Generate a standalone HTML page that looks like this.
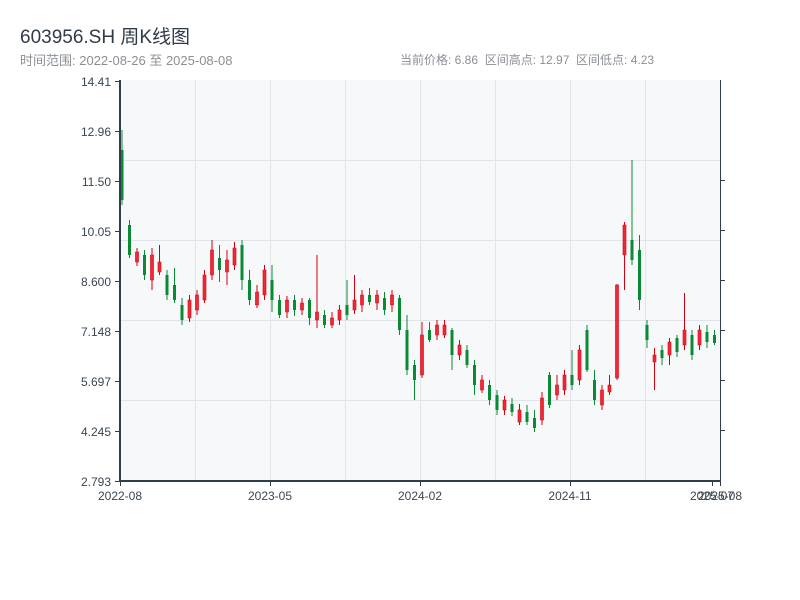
<!DOCTYPE html>
<html><head><meta charset="utf-8">
<style>
html,body{margin:0;padding:0;background:#fff;width:800px;height:600px;overflow:hidden}
body{font-family:"Liberation Sans","Noto Sans CJK SC",sans-serif;position:relative}
.t{position:absolute;left:20px;top:22px;font-size:19px;color:#2f3b4a}
.s{position:absolute;left:20px;top:50px;font-size:13px;color:#8a8f96}
.r{position:absolute;left:400px;top:51px;font-size:12px;color:#8a8f96;white-space:pre}
svg{position:absolute;left:0;top:0}
</style></head><body>
<div class="t">603956.SH 周K线图</div>
<div class="s">时间范围: 2022-08-26 至 2025-08-08</div>
<div class="r">当前价格: 6.86  区间高点: 12.97  区间低点: 4.23</div>
<svg width="800" height="600" xmlns="http://www.w3.org/2000/svg" font-family="Liberation Sans, sans-serif" font-size="12">
<rect x="120" y="80" width="600" height="401" fill="#f6f8fa"/>
<g stroke="#e1e4ea" stroke-width="1">
<line x1="195.5" y1="80" x2="195.5" y2="481"/><line x1="270.5" y1="80" x2="270.5" y2="481"/>
<line x1="345.5" y1="80" x2="345.5" y2="481"/><line x1="420.5" y1="80" x2="420.5" y2="481"/>
<line x1="495.5" y1="80" x2="495.5" y2="481"/><line x1="570.5" y1="80" x2="570.5" y2="481"/>
<line x1="645.5" y1="80" x2="645.5" y2="481"/>
<line x1="120" y1="160.5" x2="720" y2="160.5"/><line x1="120" y1="240.5" x2="720" y2="240.5"/>
<line x1="120" y1="320.5" x2="720" y2="320.5"/><line x1="120" y1="400.5" x2="720" y2="400.5"/>
</g>
<path stroke="#0b8a36" stroke-width="1" fill="none" d="M122 130V205M129.5 220V258M144.5 250V280M167 270V300M174.5 268V303M182 298V325M219.5 245V282M242 240V290M249.5 270V305M272 265V312M279.5 295V318M294.5 295V316M309.5 298V325M324.5 310V328M347 280V320M369.5 288V305M384.5 292V315M399.5 295V335M407 315V375M414.5 360V400M429.5 322V342M452 328V370M467 345V368M474.5 360V395M489.5 380V405M497 390V415M512 398V416M527 405V425M534.5 410V432M549.5 372V408M572 350V390M587 325V372M594.5 370V405M632 160V265M639.5 235V310M647 320V348M662 345V365M677 335V357M692 330V360M707 325V348M714.5 330V345"/>
<path fill="#0b8a36" d="M120.5 150h3V200h-3zM128 225h3V255h-3zM143 255h3V275h-3zM165.5 275h3V295h-3zM173 285h3V300h-3zM180.5 305h3V320h-3zM218 258h3V270h-3zM240.5 245h3V280h-3zM248 280h3V300h-3zM270.5 280h3V300h-3zM278 300h3V315h-3zM293 300h3V310h-3zM308 300h3V318h-3zM323 315h3V325h-3zM345.5 305h3V315h-3zM368 295h3V302h-3zM383 298h3V310h-3zM398 298h3V330h-3zM405.5 330h3V370h-3zM413 365h3V380h-3zM428 330h3V340h-3zM450.5 330h3V355h-3zM465.5 350h3V365h-3zM473 365h3V385h-3zM488 385h3V400h-3zM495.5 395h3V410h-3zM510.5 404h3V412h-3zM525.5 412h3V422h-3zM533 418h3V428h-3zM548 375h3V405h-3zM570.5 375h3V385h-3zM585.5 330h3V370h-3zM593 380h3V400h-3zM630.5 240h3V260h-3zM638 250h3V300h-3zM645.5 325h3V340h-3zM660.5 350h3V358h-3zM675.5 338h3V352h-3zM690.5 335h3V355h-3zM705.5 332h3V342h-3zM713 335h3V343h-3z"/>
<path stroke="#d40010" stroke-width="1" fill="none" d="M137 248V266M152 248V290M159.5 245V275M189.5 295V322M197 290V315M204.5 270V303M212 240V280M227 250V285M234.5 242V270M257 285V308M264.5 265V300M287 296V318M302 298V315M317 255V328M332 312V328M339.5 305V325M354.5 275V314M362 290V312M377 290V310M392 290V312M422 322V378M437 320V340M444.5 320V338M459.5 340V360M482 375V393M504.5 396V415M519.5 404V425M542 392V425M557 375V400M564.5 370V395M579.5 345V385M602 385V410M609.5 375V395M617 284V380M624.5 222V290M654.5 348V390M669.5 338V365M684.5 293V350M699.5 325V350"/>
<path fill="#ee2a35" stroke="#d40010" stroke-width="0.6" d="M135.5 252h3V262h-3zM150.5 255h3V280h-3zM158 262h3V272h-3zM188 300h3V318h-3zM195.5 295h3V310h-3zM203 275h3V300h-3zM210.5 250h3V275h-3zM225.5 260h3V272h-3zM233 248h3V265h-3zM255.5 292h3V305h-3zM263 270h3V295h-3zM285.5 300h3V312h-3zM300.5 303h3V310h-3zM315.5 312h3V320h-3zM330.5 318h3V325h-3zM338 310h3V320h-3zM353 300h3V310h-3zM360.5 295h3V305h-3zM375.5 295h3V303h-3zM390.5 295h3V305h-3zM420.5 335h3V375h-3zM435.5 325h3V335h-3zM443 325h3V335h-3zM458 345h3V355h-3zM480.5 380h3V390h-3zM503 400h3V410h-3zM518 410h3V422h-3zM540.5 398h3V420h-3zM555.5 385h3V395h-3zM563 375h3V390h-3zM578 350h3V380h-3zM600.5 390h3V405h-3zM608 385h3V392h-3zM615.5 285h3V378h-3zM623 225h3V255h-3zM653 355h3V362h-3zM668 342h3V355h-3zM683 330h3V345h-3zM698 330h3V345h-3z"/>
<g stroke="#2f3e4e" stroke-width="2" fill="none">
<line x1="120" y1="80" x2="120" y2="482"/><line x1="119" y1="481" x2="721" y2="481"/>
</g>
<line x1="720.5" y1="80" x2="720.5" y2="481" stroke="#2f3e4e" stroke-width="1"/>
<g stroke="#2f3e4e" stroke-width="1">
<line x1="115" y1="81.5" x2="120" y2="81.5"/><line x1="115" y1="131.5" x2="120" y2="131.5"/>
<line x1="115" y1="181.5" x2="120" y2="181.5"/><line x1="115" y1="231.5" x2="120" y2="231.5"/>
<line x1="115" y1="281.5" x2="120" y2="281.5"/><line x1="115" y1="331.5" x2="120" y2="331.5"/>
<line x1="115" y1="381.5" x2="120" y2="381.5"/><line x1="115" y1="431.5" x2="120" y2="431.5"/>
<line x1="115" y1="481.5" x2="120" y2="481.5"/>
<line x1="720" y1="180.5" x2="725" y2="180.5"/><line x1="720" y1="230.5" x2="725" y2="230.5"/>
<line x1="720" y1="280.5" x2="725" y2="280.5"/><line x1="720" y1="330.5" x2="725" y2="330.5"/>
<line x1="720" y1="380.5" x2="725" y2="380.5"/><line x1="720" y1="430.5" x2="725" y2="430.5"/>
<line x1="120.5" y1="481" x2="120.5" y2="486"/><line x1="270.5" y1="481" x2="270.5" y2="486"/>
<line x1="420.5" y1="481" x2="420.5" y2="486"/><line x1="570.5" y1="481" x2="570.5" y2="486"/>
<line x1="712.5" y1="481" x2="712.5" y2="486"/><line x1="720.5" y1="481" x2="720.5" y2="486"/>
</g>
<g fill="#3a4654" text-anchor="end">
<text x="111" y="86">14.41</text><text x="111" y="136">12.96</text><text x="111" y="186">11.50</text>
<text x="111" y="236">10.05</text><text x="111" y="286">8.600</text><text x="111" y="336">7.148</text>
<text x="111" y="386">5.697</text><text x="111" y="436">4.245</text><text x="111" y="486">2.793</text>
</g>
<g fill="#3a4654" text-anchor="middle">
<text x="120" y="500">2022-08</text><text x="270" y="500">2023-05</text><text x="420" y="500">2024-02</text>
<text x="570" y="500">2024-11</text><text x="712" y="500">2025-07</text><text x="720" y="500">2025-08</text>
</g>
</svg>
</body></html>
